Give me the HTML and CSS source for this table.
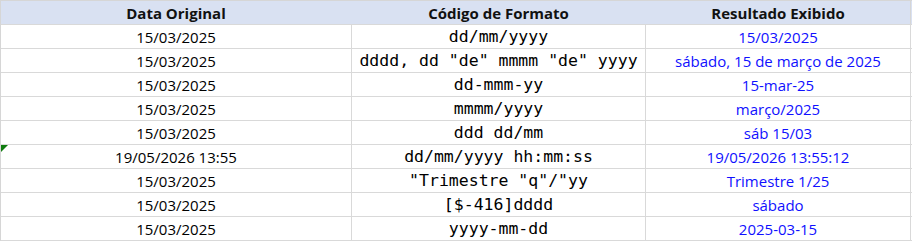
FILE: index.html
```html
<!DOCTYPE html>
<html lang="pt-BR">
<head>
<meta charset="utf-8">
<title>Formatos de data</title>
<link rel="stylesheet" href="styles.css">
</head>
<body>
<div class="sheet">
  <div class="row head">
    <div class="cell">Data Original</div>
    <div class="cell">Código de Formato</div>
    <div class="cell">Resultado Exibido</div>
  </div>
  <div class="row">
    <div class="cell">15/03/2025</div>
    <div class="cell code">dd/mm/yyyy</div>
    <div class="cell result">15/03/2025</div>
  </div>
  <div class="row">
    <div class="cell">15/03/2025</div>
    <div class="cell code">dddd, dd "de" mmmm "de" yyyy</div>
    <div class="cell result">sábado, 15 de março de 2025</div>
  </div>
  <div class="row">
    <div class="cell">15/03/2025</div>
    <div class="cell code">dd-mmm-yy</div>
    <div class="cell result">15-mar-25</div>
  </div>
  <div class="row">
    <div class="cell">15/03/2025</div>
    <div class="cell code">mmmm/yyyy</div>
    <div class="cell result">março/2025</div>
  </div>
  <div class="row">
    <div class="cell">15/03/2025</div>
    <div class="cell code">ddd dd/mm</div>
    <div class="cell result">sáb 15/03</div>
  </div>
  <div class="row">
    <div class="cell flagged">19/05/2026 13:55</div>
    <div class="cell code">dd/mm/yyyy hh:mm:ss</div>
    <div class="cell result">19/05/2026 13:55:12</div>
  </div>
  <div class="row">
    <div class="cell">15/03/2025</div>
    <div class="cell code">"Trimestre "q"/"yy</div>
    <div class="cell result">Trimestre 1/25</div>
  </div>
  <div class="row">
    <div class="cell">15/03/2025</div>
    <div class="cell code">[$-416]dddd</div>
    <div class="cell result">sábado</div>
  </div>
  <div class="row">
    <div class="cell">15/03/2025</div>
    <div class="cell code">yyyy-mm-dd</div>
    <div class="cell result">2025-03-15</div>
  </div>
</div>
</body>
</html>
```

FILE: styles.css
```css
html, body {
  margin: 0;
  padding: 0;
  background: #ffffff;
}

.sheet {
  width: 912px;
  border-top: 1px solid #d6d6d6;
  border-left: 1px solid #d6d6d6;
  box-sizing: border-box;
  font-family: "Open Sans", "Liberation Sans", sans-serif;
  font-size: 15px;
  color: #000000;
}

.row {
  display: grid;
  grid-template-columns: 351px 294px 265px;
  height: 24px;
  box-sizing: border-box;
  border-bottom: 1px solid #d9d9d9;
}

.cell {
  position: relative;
  display: flex;
  align-items: center;
  justify-content: center;
  border-right: 1px solid #d9d9d9;
  white-space: nowrap;
  line-height: 1;
  padding-top: 1px;
}

.head {
  background: #d9e1f2;
}

.head .cell {
  font-weight: 700;
  border-right-color: #d9e1f2;
  color: #111111;
}

.head .cell:last-child {
  border-right-color: #d6d6d6;
}

.code {
  font-family: "DejaVu Sans Mono", "Liberation Mono", monospace;
  font-size: 16.5px;
}

.result {
  color: #1010ff;
}

.flagged::before {
  content: "";
  position: absolute;
  left: 0;
  top: 0;
  width: 0;
  height: 0;
  border-top: 7px solid #107c10;
  border-right: 7px solid transparent;
}
```
